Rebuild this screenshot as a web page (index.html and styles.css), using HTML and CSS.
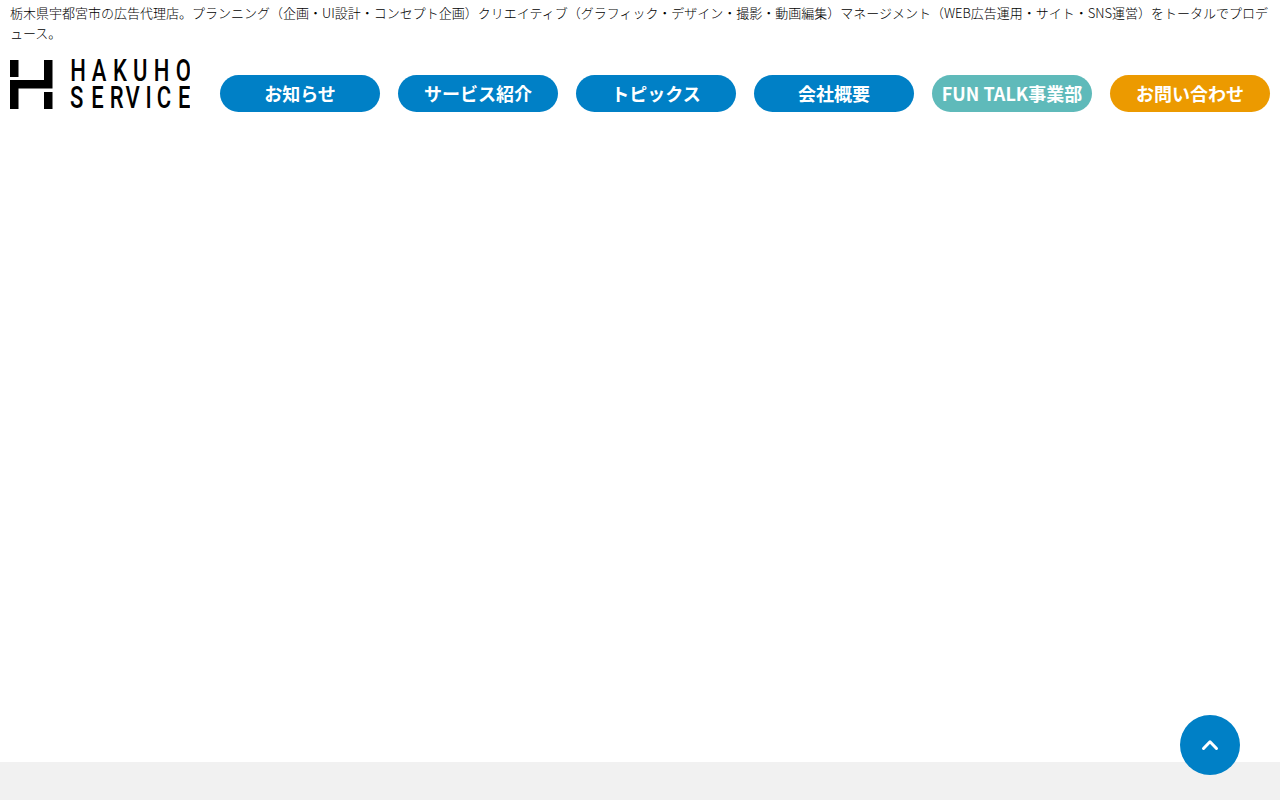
FILE: index.html
```html
<!DOCTYPE html>
<html lang="ja">
<head>
    <meta charset="UTF-8">
    <meta name="viewport" content="width=device-width, initial-scale=1.0">
    <title>HAKUHO SERVICE</title>
    <link rel="stylesheet" href="styles.css">
</head>
<body>
    <header class="header">
        <h1 class="header-lead">栃木県宇都宮市の広告代理店。プランニング（企画・UI設計・コンセプト企画）クリエイティブ（グラフィック・デザイン・撮影・動画編集）マネージメント（WEB広告運用・サイト・SNS運営）をトータルでプロデュース。</h1>
        <div class="header-inner">
            <a href="#" class="logo" aria-label="HAKUHO SERVICE">
                <svg width="180" height="52" viewBox="0 0 180 52">
                    <path d="M0 3h8.5v17H0zM34 3h8.5v28.5h-34V52H0V23h34zM34 35h8.5v17H34z"/>
                    <g class="logo-text" transform="scale(.7 1)">
                        <text y="23.7" x="97.1 127.1 157.1 186.1 216.7 247.6">HAKUHO</text>
                        <text y="51.3" x="95.4 125 152.5 175.3 198.2 220 248.8">SERVICE</text>
                    </g>
                </svg>
            </a>
            <nav>
                <ul class="nav-list">
                    <li><a href="#">お知らせ</a></li>
                    <li><a href="#">サービス紹介</a></li>
                    <li><a href="#">トピックス</a></li>
                    <li><a href="#">会社概要</a></li>
                    <li><a href="#" class="nav-funtalk">FUN TALK事業部</a></li>
                    <li><a href="#" class="nav-contact">お問い合わせ</a></li>
                </ul>
            </nav>
        </div>
    </header>

    <main class="main"></main>

    <footer class="footer"></footer>

    <a href="#" class="page-top" aria-label="ページトップへ">
        <svg width="18" height="12" viewBox="0 0 18 12">
            <path d="M2.5 9.5L9 2.8l6.5 6.7"/>
        </svg>
    </a>
</body>
</html>
```
FILE: styles.css
```css
* {
    margin: 0;
    padding: 0;
    box-sizing: border-box;
}

body {
    display: flex;
    flex-direction: column;
    height: 100vh;
    overflow: hidden;
    background: #fff;
    color: #000;
    font-family: "Noto Sans CJK JP", sans-serif;
}

a {
    color: inherit;
    text-decoration: none;
}

/* Header */
.header {
    padding: 3px 10px 0;
}

.header-lead {
    font-size: 13px;
    font-weight: 300;
    line-height: 19.5px;
}

.header-inner {
    display: flex;
    justify-content: space-between;
    align-items: flex-start;
    padding-top: 15px;
}

.logo svg {
    display: block;
}

.logo-text {
    font-family: Roboto, sans-serif;
    font-size: 31.5px;
    font-weight: 500;
    text-anchor: middle;
}

/* Navigation */
.nav-list {
    display: flex;
    gap: 18px;
    padding-top: 18px;
    list-style: none;
}

.nav-list a {
    display: block;
    width: 160px;
    height: 37px;
    border-radius: 19px;
    background: #0080c6;
    color: #fff;
    font-size: 18px;
    font-weight: bold;
    line-height: 36px;
    text-align: center;
    white-space: nowrap;
}

.nav-list .nav-funtalk {
    background: #5fbaba;
}

.nav-list .nav-contact {
    background: #ec9a00;
}

.main {
    flex: 1;
}

.footer {
    height: 38px;
    background: #f1f1f1;
}

/* Back to top button */
.page-top {
    position: fixed;
    right: 40px;
    bottom: 25px;
    display: flex;
    justify-content: center;
    align-items: center;
    width: 60px;
    height: 60px;
    border-radius: 50%;
    background: #0080c6;
}

.page-top path {
    fill: none;
    stroke: #fff;
    stroke-width: 3;
    stroke-linecap: round;
    stroke-linejoin: round;
}
```
